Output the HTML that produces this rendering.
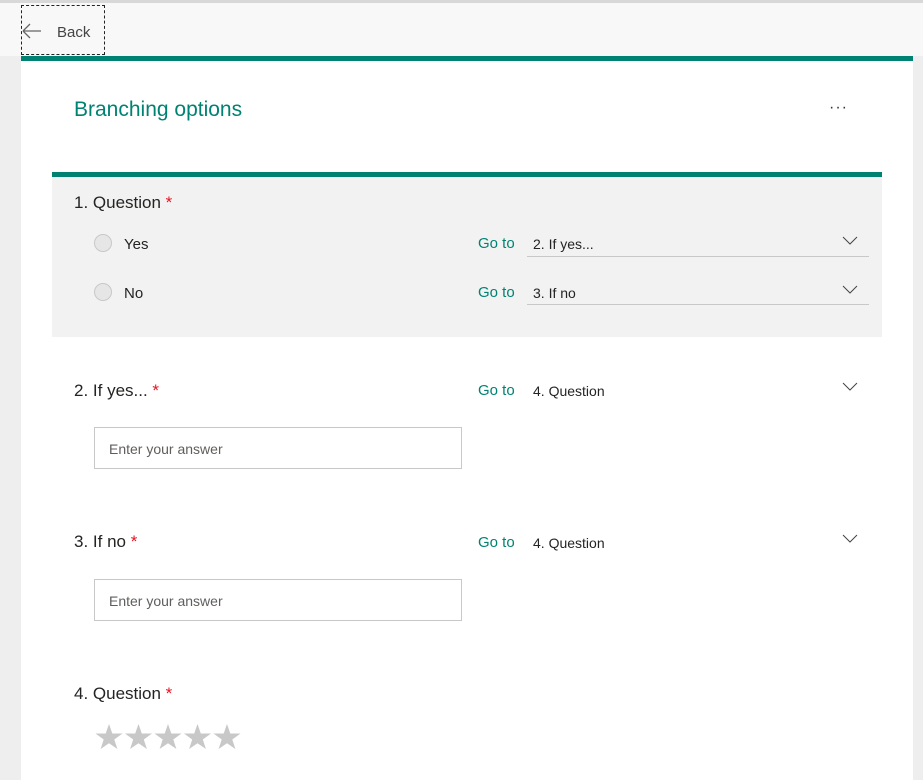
<!DOCTYPE html>
<html><head><style>
body{margin:0;width:923px;height:780px;background:#eeeeee;font-family:"Liberation Sans",sans-serif;position:relative;overflow:hidden;color:#252423}
.abs{position:absolute}
.top{left:0;top:0;width:923px;height:56px;background:#f8f8f8;border-top:3px solid #d8d8d8;box-sizing:border-box}
.card{left:21px;top:56px;width:892px;height:724px;background:#fff;border-top:5px solid #008272;box-sizing:border-box}
.sec{left:52px;top:172px;width:830px;height:165px;background:#f2f2f2;border-top:5px solid #008272;box-sizing:border-box}
.q{font-size:17px;color:#252423}
.req{color:#e81123}
.opt{font-size:15px}
.go{font-size:15px;color:#008272}
.sel{font-size:14px}
.line{height:1px;background:#c8c8c8}
.radio{width:18px;height:18px;border-radius:50%;background:#e6e6e6;border:1px solid #c8c8c8;box-sizing:border-box}
.inp{width:368px;height:42px;border:1px solid #c8c8c8;box-sizing:border-box;font-size:14px;color:#605e5c;padding:13px 0 0 14px;background:#fff}
</style></head><body>
<div class="abs top"></div>
<div class="abs" style="left:21px;top:5px;width:84px;height:50px;border:1px dashed #222;box-sizing:border-box"></div>
<svg class="abs" style="left:20px;top:22px" width="24" height="18"><path d="M3 9H21M3 9L10 2M3 9L10 16" stroke="#666" stroke-width="1.3" fill="none"/></svg>
<div class="abs" style="left:57px;top:24px;font-size:15px;color:#444">Back</div>
<div class="abs card"></div>
<div class="abs" style="left:74px;top:98px;font-size:21px;color:#008272">Branching options</div>
<div class="abs" style="left:829px;top:99px;font-size:16px;color:#333;letter-spacing:1px">···</div>
<div class="abs sec"></div>
<div class="abs q" style="left:74px;top:193px">1. Question <span class="req">*</span></div>
<div class="abs radio" style="left:94px;top:234px"></div>
<div class="abs opt" style="left:124px;top:236px">Yes</div>
<div class="abs radio" style="left:94px;top:283px"></div>
<div class="abs opt" style="left:124px;top:285px">No</div>
<div class="abs go" style="left:478px;top:235px">Go to</div>
<div class="abs sel" style="left:533px;top:236px">2. If yes...</div>
<div class="abs line" style="left:527px;top:256px;width:342px"></div>
<div class="abs go" style="left:478px;top:284px">Go to</div>
<div class="abs sel" style="left:533px;top:285px">3. If no</div>
<div class="abs line" style="left:527px;top:304px;width:342px"></div>
<svg class="abs" style="left:842px;top:236px" width="16" height="10"><path d="M1 1L8 8L15 1" stroke="#444" fill="none"/></svg>
<svg class="abs" style="left:842px;top:285px" width="16" height="10"><path d="M1 1L8 8L15 1" stroke="#444" fill="none"/></svg>

<div class="abs q" style="left:74px;top:381px">2. If yes... <span class="req">*</span></div>
<div class="abs go" style="left:478px;top:382px">Go to</div>
<div class="abs sel" style="left:533px;top:383px">4. Question</div>
<svg class="abs" style="left:842px;top:382px" width="16" height="10"><path d="M1 1L8 8L15 1" stroke="#444" fill="none"/></svg>
<div class="abs inp" style="left:94px;top:427px">Enter your answer</div>

<div class="abs q" style="left:74px;top:532px">3. If no <span class="req">*</span></div>
<div class="abs go" style="left:478px;top:534px">Go to</div>
<div class="abs sel" style="left:533px;top:535px">4. Question</div>
<svg class="abs" style="left:842px;top:534px" width="16" height="10"><path d="M1 1L8 8L15 1" stroke="#444" fill="none"/></svg>
<div class="abs inp" style="left:94px;top:579px">Enter your answer</div>

<div class="abs q" style="left:74px;top:684px">4. Question <span class="req">*</span></div>
<svg class="abs" style="left:95px;top:723px" width="150" height="30">
<defs><path id="s" d="M14 1L17.3 10.5H27.5L19.3 16.5L22.4 26L14 20.2L5.6 26L8.7 16.5L0.5 10.5H10.7Z" fill="#c8c8c8"/></defs>
<use href="#s" x="0"/><use href="#s" x="29.5"/><use href="#s" x="59"/><use href="#s" x="88.5"/><use href="#s" x="118"/>
</svg>
</body></html>
